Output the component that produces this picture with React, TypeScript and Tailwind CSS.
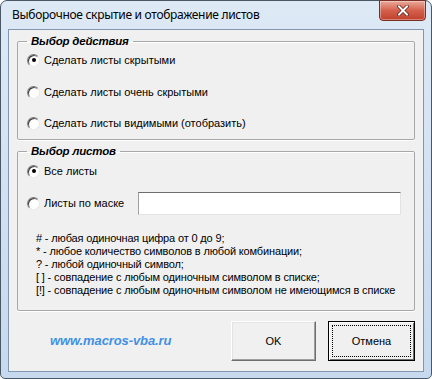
import React from 'react';

const Radio = ({ checked = false }: { checked?: boolean }) => (
  <span className="w-[13px] h-[13px] shrink-0 rounded-full bg-white border border-t-[#7a7a7a] border-l-[#7a7a7a] border-b-[#e8e8e8] border-r-[#e8e8e8] shadow-[inset_1px_1px_0_#3c3c3c] flex items-center justify-center">
    {checked && <span className="w-[4px] h-[4px] rounded-full bg-black" />}
  </span>
);

const Option = ({ label, checked, className = '' }: { label: string; checked?: boolean; className?: string }) => (
  <label className={`flex items-center h-[16px] gap-[4px] ${className}`}>
    <Radio checked={checked} />
    <span>{label}</span>
  </label>
);

const hints = [
  '# - любая одиночная цифра от 0 до 9;',
  '* - любое количество символов в любой комбинации;',
  '? - любой одиночный символ;',
  '[ ] - совпадение с любым одиночным символом в списке;',
  '[!] - совпадение с любым одиночным символом не имеющимся в списке',
];

const App = () => {
  return (
    <div className="w-[432px] h-[379px] bg-white">
      <div className="relative w-[432px] h-[379px] rounded-t-[7px] rounded-b-[5px] border border-[#4a5866] bg-gradient-to-b from-[#dde9f5] via-[#d2e1f2] to-[#c6d9ef] flex flex-col">
        {/* Title bar */}
        <div className="h-[28px] flex items-center pl-[11px] text-[12px] tracking-[-0.3px] text-black" style={{ fontFamily: '"Noto Sans", "Open Sans", sans-serif' }}>
          Выборочное скрытие и отображение листов
        </div>
        <div className="absolute top-[-1px] right-[5px] w-[47px] h-[21px] rounded-b-[4px] border border-[#7a2e24] bg-gradient-to-b from-[#e9a99b] via-[#d4604c] to-[#c0402c] flex items-center justify-center shadow-[inset_0_0_0_1px_rgba(255,255,255,0.35)]">
          <svg width="12" height="11" viewBox="0 0 12 11">
            <path d="M2 1.5 L10 9.5 M10 1.5 L2 9.5" stroke="#5a1a12" strokeWidth="3.4" strokeLinecap="square" />
            <path d="M2 1.5 L10 9.5 M10 1.5 L2 9.5" stroke="#ffffff" strokeWidth="2" strokeLinecap="square" />
          </svg>
        </div>

        {/* Client area */}
        <div
          className="mx-[7px] h-[343px] bg-[#f0f0f0] border border-[#8497b1] flex flex-col px-[8px] text-[11px] text-black"
          style={{ fontFamily: '"Liberation Sans", Arial, sans-serif' }}
        >
          <fieldset className="min-w-0 mt-[4px] border border-[#a8a8a8] shadow-[0_1px_0_#ffffff,inset_0_1px_0_#ffffff] rounded-[2px] pl-[9px] pb-[10px] h-[106px]">
            <legend className="px-[4px] font-bold italic text-[11.5px] tracking-[-0.2px] leading-[14px]">Выбор действия</legend>
            <Option label="Сделать листы скрытыми" checked className="mt-[4px]" />
            <Option label="Сделать листы очень скрытыми" className="mt-[16px]" />
            <Option label="Сделать листы видимыми (отобразить)" className="mt-[15px]" />
          </fieldset>

          <fieldset className="min-w-0 mt-[4px] border border-[#a8a8a8] shadow-[0_1px_0_#ffffff,inset_0_1px_0_#ffffff] rounded-[2px] pl-[9px] pr-[13px] h-[167px]">
            <legend className="px-[4px] font-bold italic text-[11.5px] tracking-[-0.2px] leading-[14px]">Выбор листов</legend>
            <Option label="Все листы" checked className="mt-[5px]" />
            <div className="mt-[13px] flex items-center h-[23px]">
              <Option label="Листы по маске" />
              <input
                type="text"
                className="ml-auto w-[263px] h-[23px] bg-white border border-t-[#6e6e6e] border-l-[#a0a0a0] border-b-[#e3e3e3] border-r-[#e3e3e3] outline-none"
              />
            </div>
            <div className="mt-[17px] ml-[9px] leading-[13px] tracking-[-0.15px] whitespace-nowrap">
              {hints.map((h) => (
                <div key={h}>{h}</div>
              ))}
            </div>
          </fieldset>

          <div className="mt-[10px] flex items-center">
            <div className="ml-[33px] text-[#4190e4] font-bold italic text-[13px] tracking-[-0.1px]">
              www.macros-vba.ru
            </div>
            <button className="ml-auto w-[85px] h-[40px] bg-[#f0f0f0] border border-t-[#ffffff] border-l-[#ffffff] border-b-[#6e6e6e] border-r-[#6e6e6e] shadow-[inset_-1px_-1px_0_#a0a0a0,inset_1px_1px_0_#e3e3e3]">
              OK
            </button>
            <button className="ml-[12px] w-[87px] h-[40px] bg-[#f0f0f0] border border-black p-[3px] shadow-[inset_1px_1px_0_#ffffff,inset_-1px_-1px_0_#6e6e6e]">
              <span className="w-full h-full flex items-center justify-center border border-dotted border-black">Отмена</span>
            </button>
          </div>
        </div>
      </div>
    </div>
  );
};

export default App;
